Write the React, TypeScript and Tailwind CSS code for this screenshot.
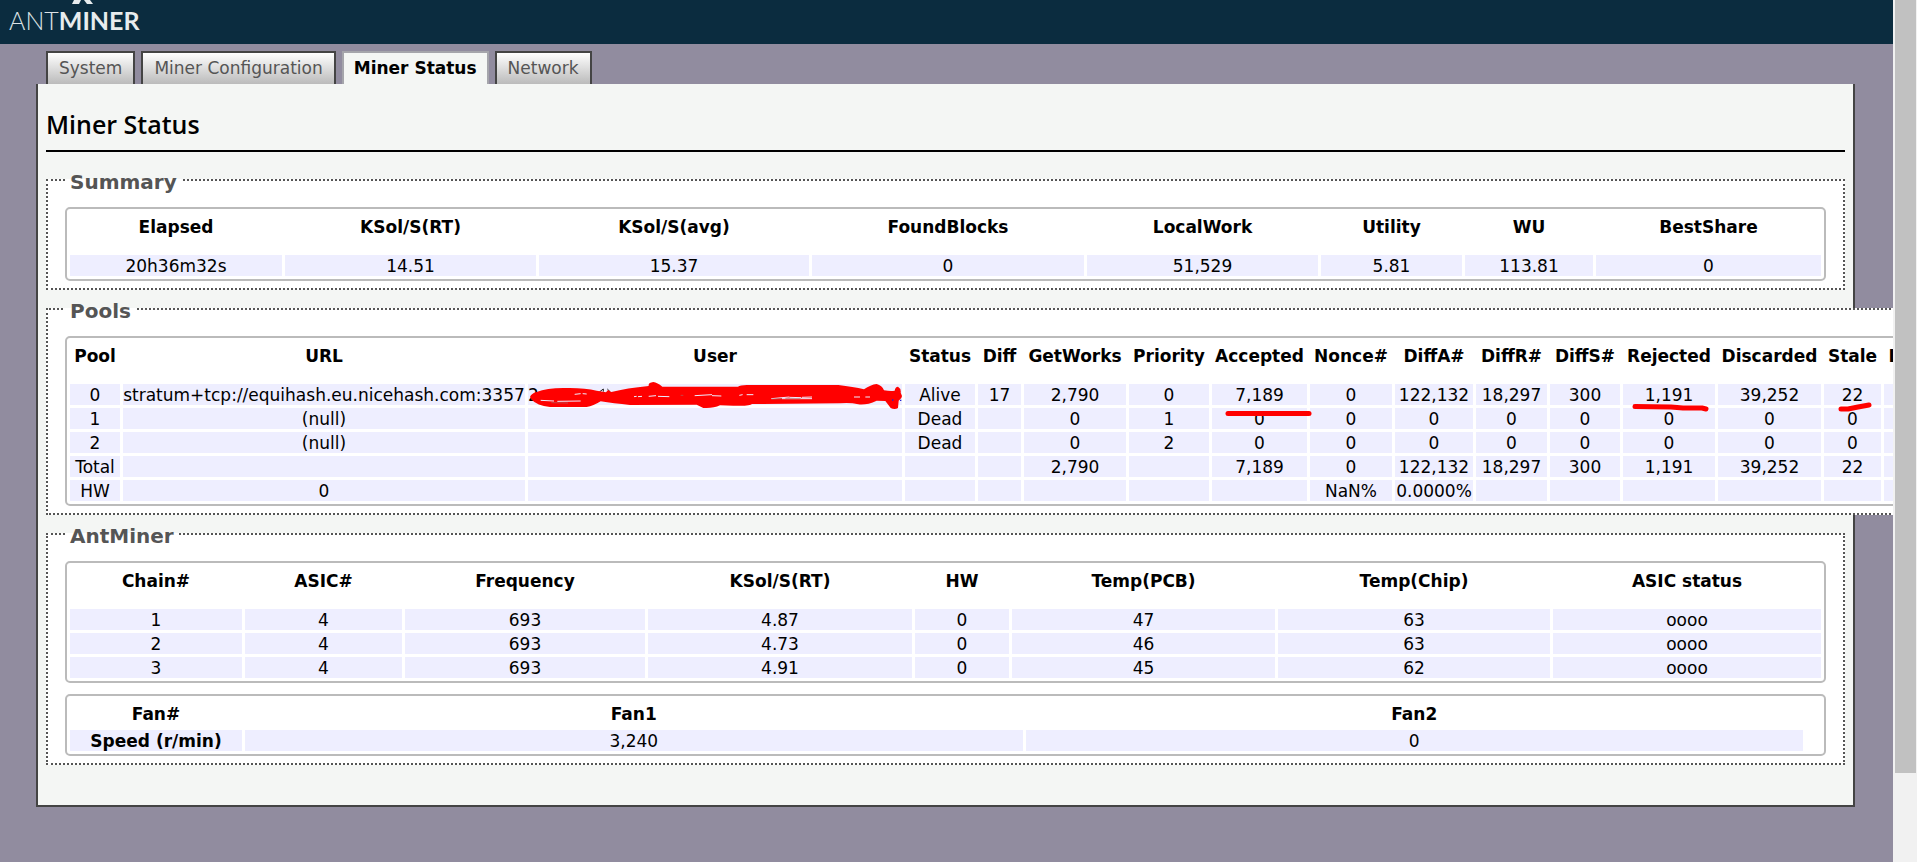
import React from 'react';
import { clsx } from 'clsx';

interface Column {
  label: string;
  width: string;
}

const TABS = ['System', 'Miner Configuration', 'Miner Status', 'Network'];

const SUMMARY_COLUMNS: Column[] = [
  { label: 'Elapsed', width: 'w-[212px]' },
  { label: 'KSol/S(RT)', width: 'w-[251px]' },
  { label: 'KSol/S(avg)', width: 'w-[270px]' },
  { label: 'FoundBlocks', width: 'w-[272px]' },
  { label: 'LocalWork', width: 'w-[231px]' },
  { label: 'Utility', width: 'w-[141px]' },
  { label: 'WU', width: 'w-[128px]' },
  { label: 'BestShare', width: 'w-[225px]' },
];

const SUMMARY_ROWS = [['20h36m32s', '14.51', '15.37', '0', '51,529', '5.81', '113.81', '0']];

const POOL_COLUMNS: Column[] = [
  { label: 'Pool', width: 'w-[50px]' },
  { label: 'URL', width: 'w-[402px]' },
  { label: 'User', width: 'w-[374px]' },
  { label: 'Status', width: 'w-[70px]' },
  { label: 'Diff', width: 'w-[43px]' },
  { label: 'GetWorks', width: 'w-[102px]' },
  { label: 'Priority', width: 'w-[80px]' },
  { label: 'Accepted', width: 'w-[95px]' },
  { label: 'Nonce#', width: 'w-[82px]' },
  { label: 'DiffA#', width: 'w-[78px]' },
  { label: 'DiffR#', width: 'w-[71px]' },
  { label: 'DiffS#', width: 'w-[70px]' },
  { label: 'Rejected', width: 'w-[92px]' },
  { label: 'Discarded', width: 'w-[103px]' },
  { label: 'Stale', width: 'w-[57px]' },
  { label: 'LSDiff', width: 'w-[66px]' },
];

const POOL_ROWS = [
  ['0', 'stratum+tcp://equihash.eu.nicehash.com:3357', '2', 'Alive', '17', '2,790', '0', '7,189', '0', '122,132', '18,297', '300', '1,191', '39,252', '22', ''],
  ['1', '(null)', '', 'Dead', '', '0', '1', '0', '0', '0', '0', '0', '0', '0', '0', ''],
  ['2', '(null)', '', 'Dead', '', '0', '2', '0', '0', '0', '0', '0', '0', '0', '0', ''],
  ['Total', '', '', '', '', '2,790', '', '7,189', '0', '122,132', '18,297', '300', '1,191', '39,252', '22', ''],
  ['HW', '0', '', '', '', '', '', '', 'NaN%', '0.0000%', '', '', '', '', '', ''],
];

const CHAIN_COLUMNS: Column[] = [
  { label: 'Chain#', width: 'w-[172px]' },
  { label: 'ASIC#', width: 'w-[157px]' },
  { label: 'Frequency', width: 'w-[240px]' },
  { label: 'KSol/S(RT)', width: 'w-[264px]' },
  { label: 'HW', width: 'w-[94px]' },
  { label: 'Temp(PCB)', width: 'w-[263px]' },
  { label: 'Temp(Chip)', width: 'w-[272px]' },
  { label: 'ASIC status', width: 'w-[268px]' },
];

const CHAIN_ROWS = [
  ['1', '4', '693', '4.87', '0', '47', '63', 'oooo'],
  ['2', '4', '693', '4.73', '0', '46', '63', 'oooo'],
  ['3', '4', '693', '4.91', '0', '45', '62', 'oooo'],
];

const TABLE = 'table-fixed border-separate border-spacing-[3px] rounded-[5px] border-2 border-[#bbb] bg-white text-center text-[17px] leading-5 whitespace-nowrap';

// Red pen marks, keyed by column, on the first pool
const MARKS: Record<string, React.ReactNode> = {
  User: (
    <svg className="absolute top-0 left-0 h-[21px] w-[374px] overflow-visible" viewBox="84 162 1122 63" aria-hidden="true">
      <path d="M298 186l12-9v8M322 177l8 8" fill="none" stroke="#222" strokeWidth="3" />
      <path
        fill="#f00"
        d="M90 201Q94 190 110 186Q140 174 190 174Q250 172 290 182L318 187L324 180L334 186Q380 174 446 168Q444 158 460 156Q472 158 487 170H714Q720 165 740 165H1015Q1060 170 1092 178Q1112 164 1130 162Q1146 166 1152 181Q1172 184 1184 182Q1186 170 1194 170Q1204 176 1202 188L1206 198Q1206 206 1196 212L1194 234Q1184 240 1172 234L1156 213L1130 212Q1100 226 1075 223Q1050 217 1020 220L756 222Q750 229 700 227L660 226Q640 236 610 234L590 224L390 225Q340 220 302 214Q280 228 260 231H150Q110 226 96 210Z"
      />
      <path
        fill="none"
        stroke="#eef"
        strokeWidth="3"
        d="M122 211l40 2M172 214l70-1M224 193l18-2M248 191l12 1M402 200l8-1M414 200l12-1M446 199l22-2M474 199l34 1M584 197l52-3M636 197l28 1M718 196l10-2M740 194h20M814 206l54-5M868 202l36 1M906 202l30-1M846 206h90M1062 201h18M1096 201h14"
      />
      <path d="M154 218l50 1M816 207l30-1M856 206h46M542 196h8" fill="none" stroke="#a66" strokeWidth="2" />
      <path d="M1176 210h4M1200 211h4" stroke="#22c" strokeWidth="4" />
    </svg>
  ),
  Accepted: (
    <svg className="absolute top-0 left-0 h-9 w-[104px] overflow-visible" viewBox="0 0 104 36" aria-hidden="true">
      <path d="M16 29.5H97" fill="none" stroke="#f00" strokeWidth="5" strokeLinecap="round" />
    </svg>
  ),
  Rejected: (
    <svg className="absolute top-0 left-0 h-9 w-[92px] overflow-visible" viewBox="0 0 92 36" aria-hidden="true">
      <path d="M12 22.5L48 23L60 24H79L83 25" fill="none" stroke="#f00" strokeWidth="5" strokeLinecap="round" strokeLinejoin="round" />
    </svg>
  ),
  Stale: (
    <svg className="absolute top-0 left-0 h-9 w-14 overflow-visible" viewBox="0 0 56 36" aria-hidden="true">
      <path d="M17 25L24 25L34 23L45 21" fill="none" stroke="#f00" strokeWidth="5" strokeLinecap="round" strokeLinejoin="round" />
    </svg>
  ),
};

interface DataTableProps {
  columns: Column[];
  rows: string[][];
  className?: string;
  marks?: Record<string, React.ReactNode>;
}

function DataTable({ columns, rows, className, marks }: DataTableProps) {
  return (
    <table className={clsx(TABLE, className)}>
      <thead>
        <tr>
          {columns.map((c) => (
            <th key={c.label} scope="col" className={clsx('h-10 p-0 pt-[5px] align-top font-bold', c.width)}>
              {c.label}
            </th>
          ))}
        </tr>
      </thead>
      <tbody>
        {rows.map((row, r) => (
          <tr key={row[0]}>
            {row.map((value, i) => {
              const mark = r === 0 ? marks?.[columns[i].label] : undefined;
              return (
                <td key={columns[i].label} className={clsx('h-[21px] bg-[#eef] p-0 pt-px', mark && 'relative', columns[i].label === 'User' && 'text-left')}>
                  {value}
                  {mark}
                </td>
              );
            })}
          </tr>
        ))}
      </tbody>
    </table>
  );
}

function FanTable() {
  return (
    <table className={clsx(TABLE, 'mt-[11px] w-full')}>
      <thead>
        <tr>
          <th scope="col" className="h-7 w-[172px] p-0 pt-[5px] align-top">Fan#</th>
          <th scope="col" className="p-0 pt-[5px] align-top">Fan1</th>
          <th scope="col" className="p-0 pt-[5px] align-top">Fan2</th>
          <td className="w-[15px] p-0" />
        </tr>
      </thead>
      <tbody>
        <tr>
          <th scope="row" className="h-[21px] bg-[#eef] p-0 pt-px">Speed (r/min)</th>
          <td className="bg-[#eef] p-0 pt-px">3,240</td>
          <td className="bg-[#eef] p-0 pt-px">0</td>
          <td className="p-0" />
        </tr>
      </tbody>
    </table>
  );
}

function Section({ title, children }: { title: string; children: React.ReactNode }) {
  return (
    <fieldset className="mb-[6px] border-2 border-dotted border-[#555] bg-white px-[17px] pt-[14px] pb-[7px]">
      <legend className="px-[5px] pt-1 text-[20px] leading-[22px] font-bold text-[#555]">{title}</legend>
      {children}
    </fieldset>
  );
}

function Logo() {
  return (
    <svg className="block h-11 w-40" viewBox="0 0 160 44" role="img" aria-label="ANTMINER">
      <path d="M74 0H81L79 4H72ZM84 0H90L93 4H87Z" fill="#e8ecee" />
      <text x="9" y="30" fontSize="25" fontWeight="300" fill="#dde2e5" fontFamily="Lato, sans-serif">
        ANT<tspan fontWeight="700" fill="#e8ecee">MINER</tspan>
      </text>
    </svg>
  );
}

export default function App() {
  return (
    <div className="flex min-h-screen bg-[#918c9f] font-['DejaVu_Sans',Verdana,sans-serif] text-black">
      <div className="min-w-0 flex-1 overflow-hidden">
        <header className="h-11 bg-[#0b2c3f]">
          <Logo />
        </header>

        <nav className="mt-[7px] ml-[46px] flex gap-[6px]">
          {TABS.map((tab) => (
            <a
              key={tab}
              href="#"
              className={clsx(
                'h-[33px] border-2 border-b-0 pt-[5px] text-[17px] leading-[21px]',
                tab === 'Miner Status'
                  ? 'border-[#a5a5ab] bg-[#f4f6f4] px-[10px] font-bold text-black'
                  : 'border-[#444] bg-linear-to-b from-white to-[#bbb] px-[11px] text-[#555]'
              )}
            >
              {tab}
            </a>
          ))}
        </nav>

        <main className="mr-[38px] ml-9 border-2 border-t-0 border-[#444] bg-[#f4f6f4] px-2 pb-[34px]">
          <h2 className="mb-[15px] border-b-2 border-black pt-6 pb-[10px] font-['Open_Sans',sans-serif] text-[25px] leading-8 font-semibold">
            Miner Status
          </h2>

          <Section title="Summary">
            <DataTable columns={SUMMARY_COLUMNS} rows={SUMMARY_ROWS} className="w-full" />
          </Section>

          <Section title="Pools">
            <DataTable columns={POOL_COLUMNS} rows={POOL_ROWS} marks={MARKS} className="w-[1890px]" />
          </Section>

          <Section title="AntMiner">
            <DataTable columns={CHAIN_COLUMNS} rows={CHAIN_ROWS} className="w-full" />
            <FanTable />
          </Section>
        </main>
      </div>

      {/* Scroll bar */}
      <div className="w-6 bg-[#f1f1f1] pr-px pl-[2px]">
        <div className="h-[773px] bg-[#c1c1c1]" />
      </div>
    </div>
  );
}
